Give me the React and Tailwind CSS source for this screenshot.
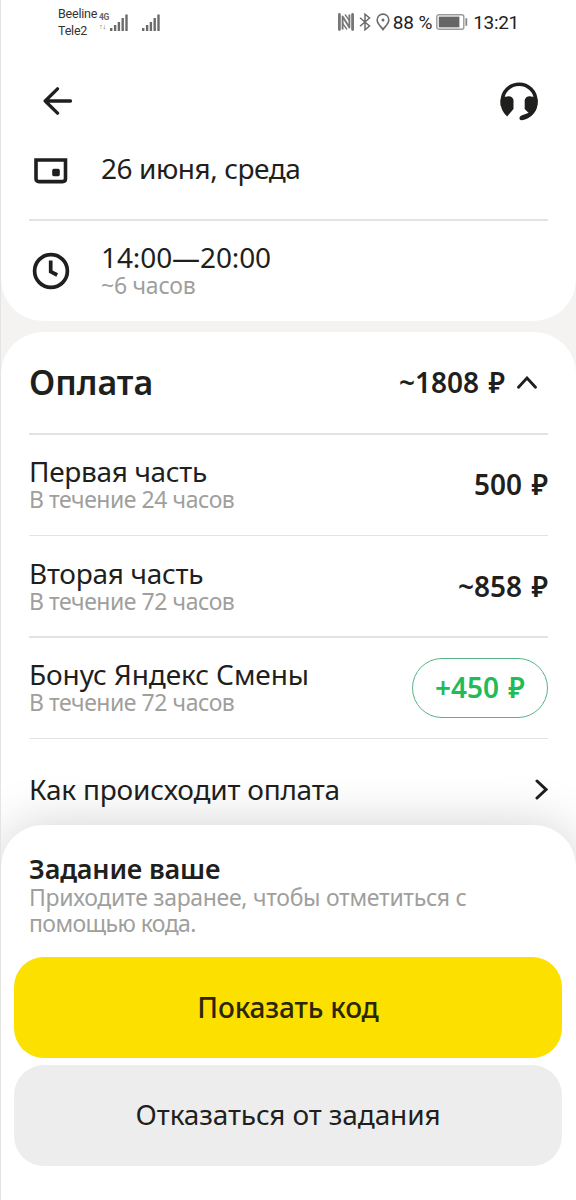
// Shift details screen: date and time, payment breakdown, bottom action sheet.

const PAYMENTS = [
  { title: 'Первая часть', titleClass: 'tracking-[-0.33px]', note: 'В течение 24 часов', amount: '500 ₽' },
  { title: 'Вторая часть', titleClass: 'tracking-[-0.3px]', note: 'В течение 72 часов', amount: '~858 ₽' },
  { title: 'Бонус Яндекс Смены', titleClass: 'tracking-[-0.1px]', note: 'В течение 72 часов', amount: '+450 ₽', bonus: true },
];

// ── Icons ─────────────────────────────────────────────────────────────────────

function SignalIcon() {
  return (
    <svg width="18" height="17" viewBox="0 0 18 17" fill="#6b6b6b">
      <rect x="0" y="14" width="2.4" height="3" />
      <rect x="3.9" y="11" width="2.4" height="6" />
      <rect x="7.7" y="8" width="2.4" height="9" />
      <rect x="11.5" y="4" width="2.4" height="13" />
      <rect x="15.3" y="0.5" width="2.4" height="16.5" />
    </svg>
  );
}

function NfcIcon() {
  return (
    <svg width="18" height="18" viewBox="0 0 18 18" fill="none" stroke="#777">
      <path d="M2.4 1.5V16.5M15.6 1.5V16.5" strokeWidth="2.8" strokeLinecap="round" />
      <path d="M5.6 16.5V3.5L12.4 14.5V1.5" strokeWidth="1.9" strokeLinejoin="round" />
      <path d="M8 1.5L12.4 7.5M5.6 10.5L10 16.5" strokeWidth="1.3" />
    </svg>
  );
}

function BluetoothIcon() {
  return (
    <svg width="12" height="18" viewBox="0 0 12 18" fill="none" stroke="#6b6b6b" strokeWidth="1.5">
      <path d="M1 4.8L10.5 13L6 16.8V1.2L10.5 5L1 13.2" />
    </svg>
  );
}

function PinIcon() {
  return (
    <svg width="14" height="18" viewBox="0 0 14 18">
      <path d="M7 16.5C5.4 13.8 1.2 11 1.2 6.9A5.8 5.8 0 0 1 12.8 6.9C12.8 11 8.6 13.8 7 16.5Z" fill="none" stroke="#6b6b6b" strokeWidth="1.6" />
      <circle cx="7" cy="7" r="1.5" fill="#6b6b6b" />
    </svg>
  );
}

function BatteryIcon() {
  return (
    <svg width="32" height="16" viewBox="0 0 32 16">
      <rect x="0.8" y="0.8" width="27" height="14.4" rx="2" fill="#fff" stroke="#999" strokeWidth="1.4" />
      <rect x="2.8" y="2.6" width="20.6" height="10.8" fill="#666" />
      <rect x="29.4" y="4.2" width="1.8" height="7.6" fill="#888" />
    </svg>
  );
}

function BackIcon() {
  return (
    <svg width="30" height="28" viewBox="0 0 30 28" fill="none" stroke="#1f1f1e" strokeWidth="3.3" strokeLinecap="round" strokeLinejoin="round">
      <path d="M14.5 1.8L2.2 14L14.5 26.2M2.2 14H27.5" />
    </svg>
  );
}

function HeadsetIcon() {
  return (
    <svg width="40" height="40" viewBox="0 0 40 40">
      <path d="M3.4 24V18.9A16.7 16.7 0 0 1 36.8 18.9C37 28.5 31.5 34.2 23.5 35.8" fill="none" stroke="#1f1f1e" strokeWidth="3.6" />
      <path d="M1.6 17C1 25 3.5 30.5 8.2 34.4L14.5 27V18Q13.6 14.2 9.6 14.2Q4.5 14.4 1.6 17Z" fill="#1f1f1e" />
      <path d="M38.6 17C39.2 25 36.5 30.5 32.2 33.5L25.7 27V18Q26.6 14.2 30.6 14.2Q35.7 14.4 38.6 17Z" fill="#1f1f1e" />
      <path d="M22.5 33.6L30.5 30.6L33.4 32.4Q29.5 36.9 22.8 38.2Q20.4 38.4 20.4 36Q20.6 34.3 22.5 33.6Z" fill="#1f1f1e" />
    </svg>
  );
}

function CalendarIcon() {
  return (
    <svg width="34" height="26" viewBox="0 0 34 26">
      <path d="M2 2H31.5V20.5Q31.5 23.6 28.5 23.6H5Q2 23.6 2 20.5Z" fill="none" stroke="#1f1f1e" strokeWidth="3.6" />
      <rect x="18.2" y="10.8" width="7.6" height="7.4" rx="1.6" fill="#1f1f1e" />
    </svg>
  );
}

function ClockIcon() {
  return (
    <svg width="38" height="38" viewBox="0 0 38 38" fill="none" stroke="#1f1f1e" strokeWidth="3.7">
      <circle cx="19" cy="19" r="16.4" />
      <path d="M18.7 8.6V19.6L25.2 23" />
    </svg>
  );
}

// ── Building blocks ───────────────────────────────────────────────────────────

function StatusBar() {
  return (
    <div className="flex h-11 shrink-0 items-center pl-[57px] pr-[57px] text-[#333]">
      <div className="flex w-[41px] flex-col whitespace-nowrap font-[Roboto] text-[12.5px] leading-[17px] tracking-[-0.2px]">
        <span>Beeline</span>
        <span>Tele2</span>
      </div>
      <div className="flex w-[11px] flex-col items-start font-[Roboto] text-[8.5px] font-bold leading-[9px] tracking-[-0.3px] text-[#666]">
        <span>4G</span>
        <span className="text-[7.5px]">↑↓</span>
      </div>
      <SignalIcon />
      <div className="ml-[14px]">
        <SignalIcon />
      </div>
      <div className="ml-auto flex items-center">
        <NfcIcon />
        <div className="ml-[4px]"><BluetoothIcon /></div>
        <div className="ml-[5px]"><PinIcon /></div>
        <span className="ml-[3px] whitespace-nowrap pt-px font-[Roboto] text-[19px] leading-5 tracking-[-0.15px] text-[#222]">88 %</span>
        <div className="ml-[4px]"><BatteryIcon /></div>
        <span className="ml-[5px] pt-px font-[Roboto] text-[19px] leading-5 tracking-[-0.3px] text-[#222]">13:21</span>
      </div>
    </div>
  );
}

function Divider() {
  return <div className="mx-7 h-[1.5px] shrink-0 bg-[#e3e3e2]" />;
}

function Amount({ value, bonus }) {
  if (bonus) {
    return (
      <div className="flex h-[60px] w-[136px] items-center justify-center rounded-full border border-[#54b486] pb-[2px] text-[28px] font-[560] text-[#21bb58] [word-spacing:2px]">
        {value}
      </div>
    );
  }
  return <span className="pb-px text-[28px] font-[560] leading-[30px] [word-spacing:2px]">{value}</span>;
}

function PaymentRow({ title, titleClass, note, amount, bonus }) {
  return (
    <div className="flex h-[100px] shrink-0 items-center justify-between px-7">
      <div className="whitespace-nowrap pb-px">
        <p className={`text-[28px] leading-[30px] ${titleClass}`}>{title}</p>
        <p className="text-[23px] leading-[26px] tracking-[-0.45px] text-[#9f9f9d]">{note}</p>
      </div>
      <Amount value={amount} bonus={bonus} />
    </div>
  );
}

// ── Screen ────────────────────────────────────────────────────────────────────

export default function App() {
  return (
    <div className="flex h-[1200px] w-[576px] flex-col overflow-hidden border-l border-[#e4e4e4] bg-[#f4f3f2] font-['Noto_Sans',sans-serif] text-[#1f1f1e]">
      <section className="flex h-[321px] shrink-0 flex-col rounded-b-[42px] bg-white">
        <StatusBar />
        <header className="flex h-[114px] items-center justify-between pl-[42px] pr-[37px]">
          <BackIcon />
          <div className="pt-[2px]"><HeadsetIcon /></div>
        </header>
        <div className="-mt-10 flex h-[101px] items-center gap-[33px] pl-[33px]">
          <div className="pt-[4px]"><CalendarIcon /></div>
          <span className="pb-[2px] text-[28px] leading-[30px] tracking-[-0.45px]">26 июня, среда</span>
        </div>
        <Divider />
        <div className="flex flex-1 items-center gap-[31px] pl-[31px]">
          <ClockIcon />
          <div className="pb-[2px]">
            <p className="text-[28px] leading-[30px] tracking-[-0.1px]">14:00—20:00</p>
            <p className="text-[23px] leading-[26px] tracking-[-0.25px] text-[#9f9f9d]">~6 часов</p>
          </div>
        </div>
      </section>

      <section className="mt-[11px] flex h-[543px] shrink-0 flex-col rounded-t-[42px] bg-white">
        <div className="flex h-[101px] shrink-0 items-center justify-between pl-7 pr-[39px]">
          <h2 className="pb-[2px] text-[34px] font-semibold leading-[40px]">Оплата</h2>
          <div className="flex items-center gap-[12px]">
            <Amount value="~1808 ₽" />
            <svg width="20" height="13" viewBox="0 0 20 13" fill="none" stroke="#1f1f1e" strokeWidth="2.8" strokeLinecap="round">
              <path d="M1.5 11.3L10 2L18.5 11.3" />
            </svg>
          </div>
        </div>
        <Divider />
        {PAYMENTS.map((p) => (
          <div key={p.title}>
            <PaymentRow {...p} />
            <Divider />
          </div>
        ))}
        <div className="flex h-[101px] shrink-0 items-center justify-between px-7">
          <span className="pb-[2px] text-[28px] leading-[30px] tracking-[-0.22px]">Как происходит оплата</span>
          <svg width="13" height="21" viewBox="0 0 13 21" fill="none" stroke="#1f1f1e" strokeWidth="3" strokeLinecap="round">
            <path d="M2 2L11 10.5L2 19" />
          </svg>
        </div>
      </section>

      <section className="relative -mt-[50px] flex flex-1 flex-col rounded-t-[42px] bg-white pl-[13px] pr-[14px] pt-[29px] shadow-[0_0_52px_rgba(0,0,0,0.18)]">
        <div className="px-[15px]">
          <h3 className="text-[27px] font-semibold leading-[30px] tracking-[-0.2px]">Задание ваше</h3>
          <p className="text-[23px] leading-[26px] tracking-[-0.3px] text-[#9f9f9d]">
            Приходите заранее, чтобы отметиться с
            <br />
            <span className="tracking-[-0.6px]">помощью кода.</span>
          </p>
        </div>
        <button className="mt-[21px] h-[101px] shrink-0 rounded-[30px] bg-[#fce000] pb-[2px] text-[28px] font-medium tracking-[-0.15px] text-[#2b2705]">
          Показать код
        </button>
        <button className="mt-[7px] h-[101px] shrink-0 rounded-[30px] bg-[#ededed] pb-[3px] text-[28px] tracking-[-0.13px]">
          Отказаться от задания
        </button>
      </section>
    </div>
  );
}
